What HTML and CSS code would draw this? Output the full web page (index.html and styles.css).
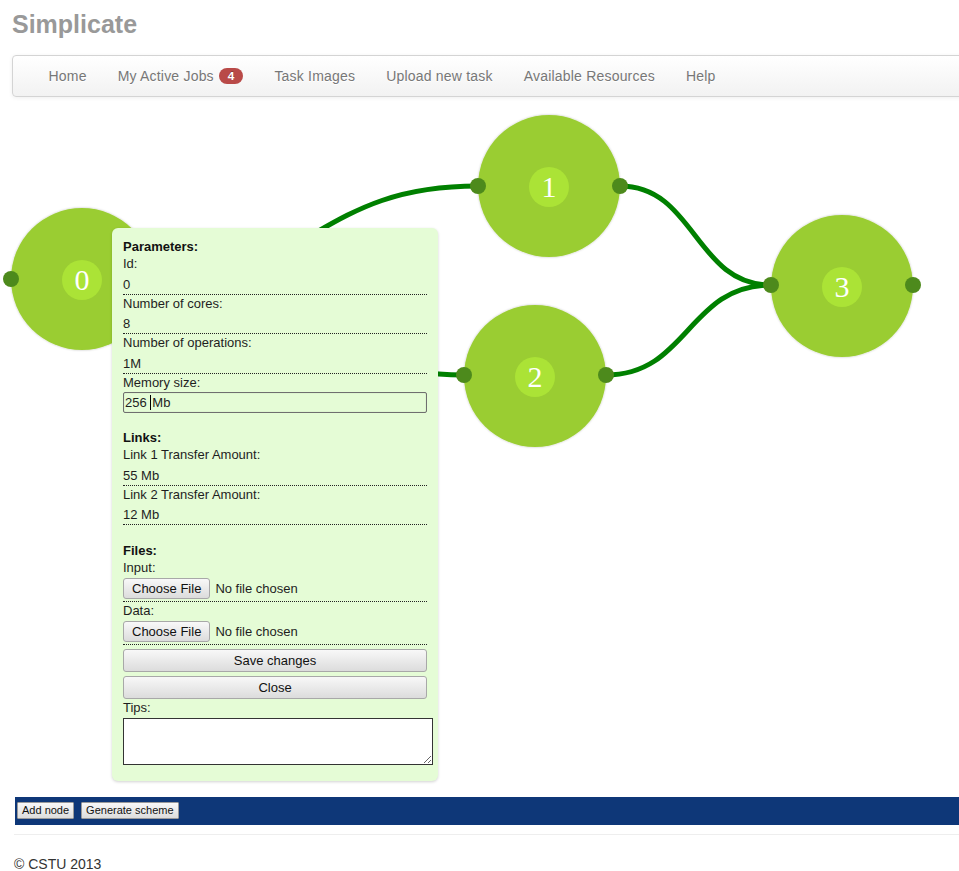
FILE: index.html
```html
<!DOCTYPE html>
<html lang="en">
<head>
<meta charset="utf-8">
<title>Simplicate</title>
<link rel="stylesheet" href="styles.css">
</head>
<body>
<div class="page">
  <header class="masthead">
    <h1 class="brand">Simplicate</h1>
  </header>

  <nav class="navbar">
    <ul class="nav">
      <li><a href="#">Home</a></li>
      <li><a href="#">My Active Jobs<span class="badge">4</span></a></li>
      <li><a href="#">Task Images</a></li>
      <li><a href="#">Upload new task</a></li>
      <li><a href="#">Available Resources</a></li>
      <li><a href="#">Help</a></li>
    </ul>
  </nav>

  <main class="workspace">
    <svg class="scheme" width="1000" height="700" viewBox="0 0 1000 700">
      <defs>
        <filter id="node-shadow" x="-20%" y="-20%" width="140%" height="140%">
          <feDropShadow dx="0" dy="0" stdDeviation="1.2" flood-color="#000" flood-opacity="0.25"/>
        </filter>
      </defs>

      <!-- links between nodes -->
      <g class="links" fill="none" stroke="#008000" stroke-width="5">
        <path d="M153,182 C316,182 316,89 478,89"/>
        <path d="M153,182 C308,182 308,278 464,278"/>
        <path d="M620,89 C695,89 695,188 771,188"/>
        <path d="M606,278 C688,278 688,188 771,188"/>
      </g>

      <!-- node 0 -->
      <g class="node">
        <circle cx="82" cy="182" r="71" fill="#9acd32" filter="url(#node-shadow)"/>
        <circle cx="82" cy="183" r="20" fill="#abe336"/>
        <text x="82" y="193" class="node-num">0</text>
        <circle cx="11" cy="182" r="8" fill="#4d8a1c"/>
        <circle cx="153" cy="182" r="8" fill="#4d8a1c"/>
      </g>

      <!-- node 1 -->
      <g class="node">
        <circle cx="549" cy="89" r="71" fill="#9acd32" filter="url(#node-shadow)"/>
        <circle cx="549" cy="90" r="20" fill="#abe336"/>
        <text x="549" y="100" class="node-num">1</text>
        <circle cx="478" cy="89" r="8" fill="#4d8a1c"/>
        <circle cx="620" cy="89" r="8" fill="#4d8a1c"/>
      </g>

      <!-- node 2 -->
      <g class="node">
        <circle cx="535" cy="279" r="71" fill="#9acd32" filter="url(#node-shadow)"/>
        <circle cx="535" cy="280" r="20" fill="#abe336"/>
        <text x="535" y="290" class="node-num">2</text>
        <circle cx="464" cy="278" r="8" fill="#4d8a1c"/>
        <circle cx="606" cy="278" r="8" fill="#4d8a1c"/>
      </g>

      <!-- node 3 -->
      <g class="node">
        <circle cx="842" cy="189" r="71" fill="#9acd32" filter="url(#node-shadow)"/>
        <circle cx="842" cy="190" r="20" fill="#abe336"/>
        <text x="842" y="200" class="node-num">3</text>
        <circle cx="771" cy="188" r="8" fill="#4d8a1c"/>
        <circle cx="913" cy="188" r="8" fill="#4d8a1c"/>
      </g>
    </svg>

    <form class="node-panel">
      <section class="group">
        <div class="group-title">Parameters:</div>
        <div class="field">
          <div class="label">Id:</div>
          <div class="value">0</div>
        </div>
        <div class="field">
          <div class="label">Number of cores:</div>
          <div class="value">8</div>
        </div>
        <div class="field">
          <div class="label">Number of operations:</div>
          <div class="value">1M</div>
        </div>
        <div class="field field-edit">
          <div class="label">Memory size:</div>
          <div class="textbox">256&nbsp;<span class="caret"></span>Mb</div>
        </div>
      </section>

      <section class="group">
        <div class="group-title">Links:</div>
        <div class="field">
          <div class="label">Link 1 Transfer Amount:</div>
          <div class="value">55 Mb</div>
        </div>
        <div class="field">
          <div class="label">Link 2 Transfer Amount:</div>
          <div class="value">12 Mb</div>
        </div>
      </section>

      <section class="group group-last">
        <div class="group-title">Files:</div>
        <div class="field">
          <div class="label">Input:</div>
          <div class="file-row">
            <button type="button" class="btn">Choose File</button>
            <span class="file-name">No file chosen</span>
          </div>
        </div>
        <div class="field">
          <div class="label">Data:</div>
          <div class="file-row">
            <button type="button" class="btn">Choose File</button>
            <span class="file-name">No file chosen</span>
          </div>
        </div>
        <button type="button" class="btn btn-wide">Save changes</button>
        <button type="button" class="btn btn-wide">Close</button>
        <div class="label">Tips:</div>
        <textarea class="tips"></textarea>
      </section>
    </form>
  </main>

  <div class="toolbar">
    <button type="button" class="tool-btn">Add node</button>
    <button type="button" class="tool-btn">Generate scheme</button>
  </div>

  <hr class="rule">
  <footer class="copyright">© CSTU 2013</footer>
</div>
</body>
</html>
```

FILE: styles.css
```css
html {
  overflow: hidden;
}

body {
  margin: 0;
  background: #fff;
  font-family: "Liberation Sans", Arial, sans-serif;
  color: #333;
}

.page {
  width: 1010px;
}

/* ---------- header ---------- */
.masthead {
  padding: 6px 12px 0;
}

.brand {
  margin: 0;
  font-size: 25px;
  line-height: 36px;
  font-weight: bold;
  color: #999;
}

/* ---------- top navigation ---------- */
.navbar {
  margin: 13px 0 0 12px;
  height: 40px;
  padding: 0 20px;
  border: 1px solid #d4d4d4;
  border-radius: 4px;
  background: linear-gradient(#ffffff, #f2f2f2);
  box-shadow: 0 1px 4px rgba(0, 0, 0, 0.065);
}

.nav {
  display: flex;
  margin: 0;
  padding: 0;
  list-style: none;
}

.nav a {
  display: block;
  padding: 10px 15.5px;
  font-size: 14px;
  line-height: 20px;
  letter-spacing: 0.2px;
  color: #777;
  text-decoration: none;
  text-shadow: 0 1px 0 #fff;
}

.badge {
  display: inline-block;
  margin-left: 5px;
  padding: 1px 9px;
  border-radius: 9px;
  background: #b94a48;
  color: #fff;
  font-size: 11.8px;
  font-weight: bold;
  line-height: 14px;
  letter-spacing: 0;
  text-shadow: 0 -1px 0 rgba(0, 0, 0, 0.25);
  vertical-align: 1px;
}

/* ---------- scheme canvas ---------- */
.workspace {
  position: relative;
  height: 700px;
}

.scheme {
  position: absolute;
  top: 0;
  left: 0;
}

.node-num {
  font-family: "Liberation Serif", "Times New Roman", serif;
  font-size: 30px;
  fill: #fff;
  text-anchor: middle;
}

/* ---------- node properties popup ---------- */
.node-panel {
  position: absolute;
  top: 131px;
  left: 112px;
  width: 304px;
  padding: 11px 11px 16px;
  border-radius: 6px;
  background: #e5fcd6;
  box-shadow: 0 1px 3px rgba(0, 0, 0, 0.18);
  font-size: 13px;
  color: #1e1e1e;
}

.group {
  margin-bottom: 17.5px;
}

.group-last {
  margin-bottom: 0;
}

.group-title {
  font-weight: bold;
  line-height: 16px;
  color: #111;
}

.label {
  line-height: 18px;
}

.value {
  padding-top: 2.5px;
  line-height: 18px;
}

.field {
  border-bottom: 1px dotted #222;
}

.field-edit {
  border-bottom: 0;
}

.textbox {
  height: 19px;
  padding: 0 1px;
  border: 1px solid #6f6f6f;
  border-radius: 2px;
  background: #e5fcd6;
  line-height: 19px;
  box-shadow: inset 0 0 1px rgba(0, 0, 0, 0.3);
}

.caret {
  display: inline-block;
  width: 1px;
  height: 15px;
  margin-right: 1px;
  background: #000;
  vertical-align: -3px;
}

.file-row {
  display: flex;
  align-items: center;
  gap: 5px;
  height: 24px;
}

.btn {
  height: 21px;
  padding: 0 8px;
  border: 1px solid #a8a8a8;
  border-radius: 3px;
  background: linear-gradient(#f8f8f8, #dcdcdc);
  font-family: "Liberation Sans", Arial, sans-serif;
  font-size: 13px;
  color: #111;
}

.btn-wide {
  display: block;
  width: 100%;
  height: 23px;
  margin-top: 4px;
}

.tips {
  display: block;
  box-sizing: border-box;
  width: 310px;
  height: 47px;
  margin: 1px 0 0;
  border: 1px solid #333;
  background: #fff;
  font-family: "Liberation Mono", monospace;
}

/* ---------- scheme toolbar ---------- */
.toolbar {
  display: flex;
  gap: 7px;
  height: 18px;
  margin-left: 15px;
  padding: 5px 2px;
  background: #0e3778;
}

.tool-btn {
  height: 17px;
  padding: 0 4px;
  border: 1px solid #9a9a9a;
  border-radius: 1px;
  background: linear-gradient(#f8f8f8, #dddddd);
  font-family: "Liberation Sans", Arial, sans-serif;
  font-size: 11px;
  line-height: 15px;
  color: #111;
}

/* ---------- footer ---------- */
.rule {
  margin: 9px 0 0 14px;
  border: 0;
  border-top: 1px solid #eee;
}

.copyright {
  padding: 19px 0 0 14px;
  font-size: 14px;
  line-height: 20px;
  color: #333;
}
```
